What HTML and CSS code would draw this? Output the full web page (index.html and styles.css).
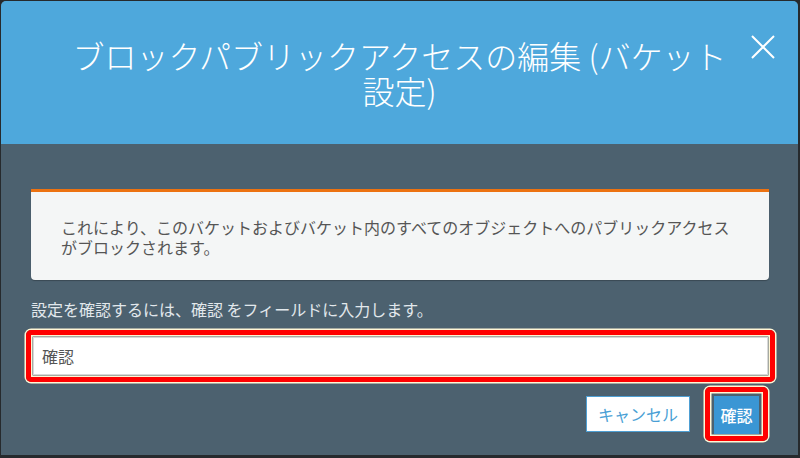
FILE: index.html
```html
<!DOCTYPE html>
<html lang="ja">
<head>
<meta charset="utf-8">
<link rel="stylesheet" href="styles.css">
</head>
<body>
<div class="modal">
  <header class="modal-header">
    <h2 class="title">ブロックパブリックアクセスの編集 (バケット設定)</h2>
    <button class="close" aria-label="閉じる">
      <svg width="24" height="24" viewBox="0 0 24 24"><path d="M1 1 L23 23 M23 1 L1 23" stroke="#fff" stroke-width="2" fill="none"/></svg>
    </button>
  </header>
  <div class="modal-body">
    <div class="alert">これにより、このバケットおよびバケット内のすべてのオブジェクトへのパブリックアクセスがブロックされます。</div>
    <p class="label">設定を確認するには、確認 をフィールドに入力します。</p>
    <div class="hl hl-input">
      <input class="field" type="text" value="確認">
    </div>
    <div class="actions">
      <button class="btn btn-cancel">キャンセル</button>
      <div class="hl hl-btn">
        <button class="btn btn-primary">確認</button>
      </div>
    </div>
  </div>
</div>
</body>
</html>
```

FILE: styles.css
```css
html, body {
  margin: 0;
  padding: 0;
}
body {
  background: #262a2d;
  width: 800px;
  height: 458px;
  overflow: hidden;
  font-family: "Noto Sans CJK JP", "Noto Sans", sans-serif;
}
.modal {
  margin: 1px 2px 3px 1px;
  height: 454px;
  background: #4c616f;
  border-radius: 5px 5px 0 0;
  display: flex;
  flex-direction: column;
}
.modal-header {
  position: relative;
  background: #4ea8dc;
  border-radius: 5px 5px 0 0;
  padding: 37px 60px 36px;
}
.title {
  margin: 0;
  color: #fff;
  font-size: 32px;
  line-height: 35px;
  font-weight: 300;
  text-align: center;
}
.close {
  position: absolute;
  top: 34px;
  right: 23px;
  width: 24px;
  height: 24px;
  padding: 0;
  border: 0;
  background: none;
  display: flex;
}
.modal-body {
  padding: 45px 29px 0 30px;
  display: flex;
  flex-direction: column;
}
.alert {
  background: #f4f6f6;
  border-top: 3px solid #ec7211;
  border-radius: 0 0 4px 4px;
  padding: 25px 30px 23px;
  color: #555;
  font-size: 16px;
  line-height: 20px;
  box-shadow: 0 1px 1px rgba(0,0,0,0.25);
}
.label {
  margin: 19px 0 11px;
  color: #e2e8ec;
  font-size: 16px;
  line-height: 20px;
}
.hl {
  border: 5px solid #ff0000;
  border-radius: 5px;
  box-shadow: 0 0 0 1.5px #fff6d5, inset 0 0 0 1.5px #fff6d5;
}
.hl-input {
  margin: 0 -6px 0 -5px;
  padding: 2px;
  display: flex;
}
.field {
  flex: 1;
  height: 38px;
  box-sizing: border-box;
  border: 1px solid #d8d8d8;
  background: #fff;
  padding: 0 8px;
  font-family: "Noto Sans CJK JP", sans-serif;
  font-size: 16px;
  color: #555;
  outline: none;
}
.actions {
  margin-top: 5px;
  display: flex;
  justify-content: flex-end;
  align-items: center;
  gap: 15px;
  padding-right: 1px;
}
.btn {
  font-family: "Noto Sans CJK JP", sans-serif;
  font-size: 16px;
  height: 36px;
  line-height: 20px;
  cursor: pointer;
}
.btn-cancel {
  width: 104px;
  background: #fff;
  border: 1px solid #4e9fd3;
  color: #4a9fd5;
  padding: 0;
}
.hl-btn {
  padding: 4px 4px 2px;
  display: flex;
}
.btn-primary {
  width: 45px;
  height: 38px;
  background: #3a96d4;
  border: 0;
  color: #fff;
  padding: 0;
  font-weight: 500;
}
```
